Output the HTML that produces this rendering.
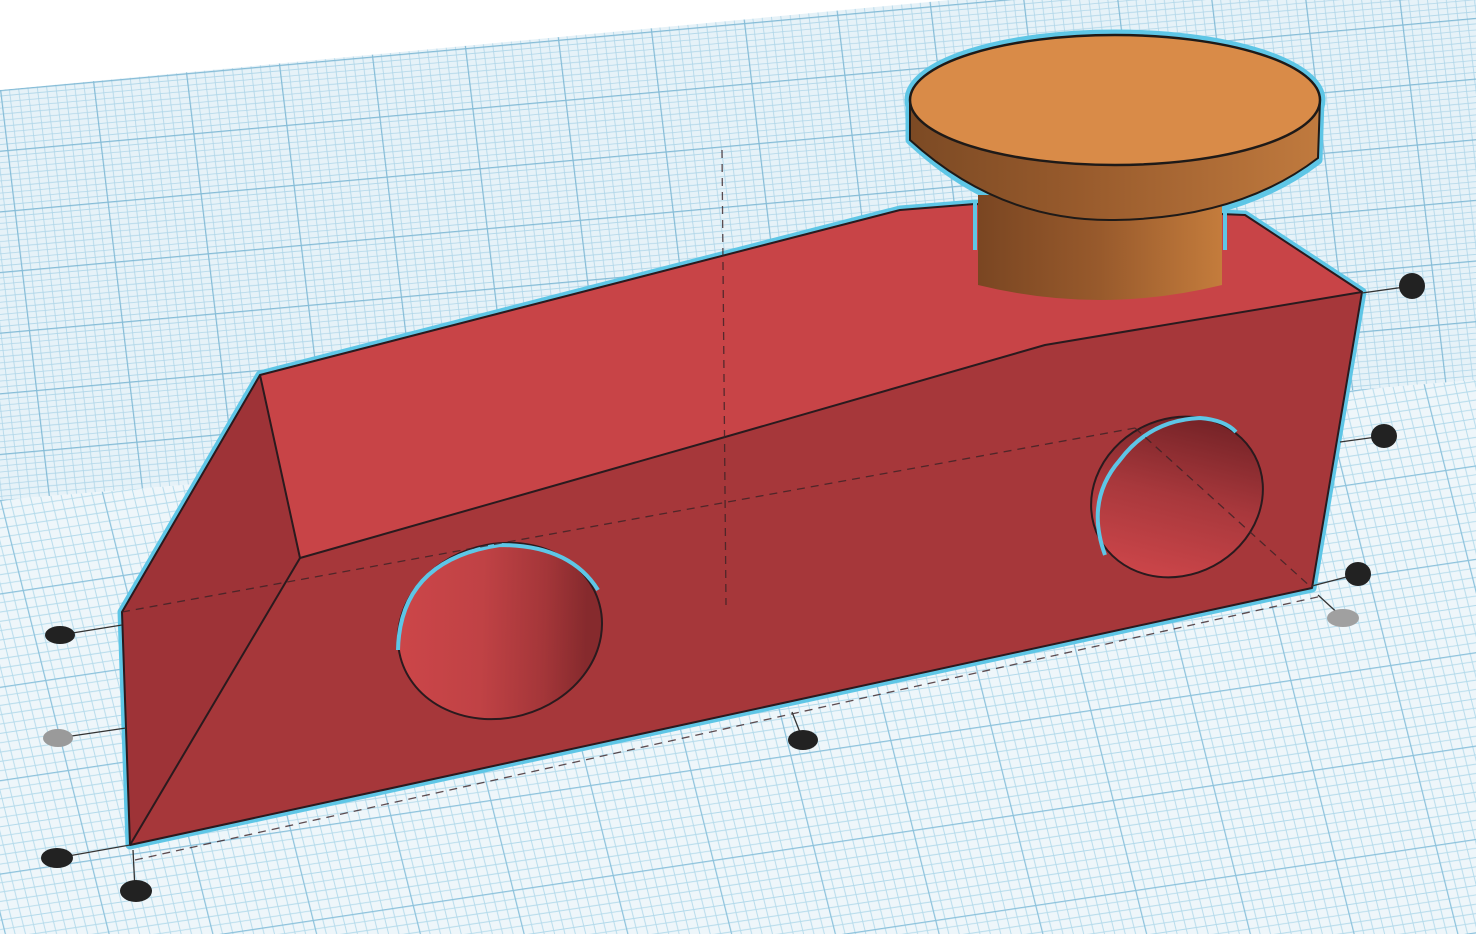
<!DOCTYPE html>
<html><head><meta charset="utf-8"><style>
html,body{margin:0;padding:0;background:#fff;width:1476px;height:934px;overflow:hidden}
svg{display:block}
</style></head><body>
<svg width="1476" height="934" viewBox="0 0 1476 934" xmlns="http://www.w3.org/2000/svg">
<defs>
<clipPath id="floorTop"><polygon points="0,90 950,0 1476,0 1476,380 0,500"/></clipPath>
<clipPath id="floorBot"><polygon points="0,500 1476,380 1476,934 0,934"/></clipPath>
<pattern id="gTop" width="93" height="60" patternUnits="userSpaceOnUse" patternTransform="matrix(1,-0.09,0.12,1,0,90)">
<rect width="93" height="60" fill="#e6f2f8"/>
<path d="M9.3,0V60M18.6,0V60M27.9,0V60M37.2,0V60M46.5,0V60M55.8,0V60M65.1,0V60M74.4,0V60M83.7,0V60M0,6H93M0,12H93M0,18H93M0,24H93M0,30H93M0,36H93M0,42H93M0,48H93M0,54H93" stroke="#afd6e9" stroke-width="0.8" fill="none"/>
<path d="M0.5,0V60M0,0.5H93" stroke="#85bcd7" stroke-width="1.4" fill="none"/>
</pattern>
<pattern id="gBot" width="100" height="90" patternUnits="userSpaceOnUse" patternTransform="matrix(1,-0.15,0.25,1,0,500)">
<rect width="100" height="90" fill="#eef6fa"/>
<path d="M10,0V90M20,0V90M30,0V90M40,0V90M50,0V90M60,0V90M70,0V90M80,0V90M90,0V90M0,9H100M0,18H100M0,27H100M0,36H100M0,45H100M0,54H100M0,63H100M0,72H100M0,81H100" stroke="#b3daeb" stroke-width="0.9" fill="none"/>
<path d="M0.5,0V90M0,0.5H100" stroke="#8cc2dc" stroke-width="1.4" fill="none"/>
</pattern>
<linearGradient id="hole" x1="0" y1="0" x2="1" y2="0.25">
<stop offset="0" stop-color="#cf474a"/><stop offset="0.5" stop-color="#c04245"/><stop offset="0.8" stop-color="#a43639"/><stop offset="1" stop-color="#862a2d"/></linearGradient>
<linearGradient id="hole2" x1="0.1" y1="0.9" x2="0.9" y2="0.1">
<stop offset="0" stop-color="#d0474b"/><stop offset="0.5" stop-color="#a8383c"/><stop offset="1" stop-color="#6e2024"/></linearGradient>
<linearGradient id="band" x1="0" y1="0" x2="1" y2="0">
<stop offset="0" stop-color="#7c4a24"/><stop offset="0.4" stop-color="#975a2c"/><stop offset="1" stop-color="#c07a3e"/></linearGradient>
<linearGradient id="stem" x1="0" y1="0" x2="1" y2="0">
<stop offset="0" stop-color="#7a4622"/><stop offset="0.5" stop-color="#985a2c"/><stop offset="1" stop-color="#c47c3c"/></linearGradient>
</defs>
<rect width="1476" height="934" fill="url(#gTop)" clip-path="url(#floorTop)"/>
<rect width="1476" height="934" fill="url(#gBot)" clip-path="url(#floorBot)"/>

<!-- outline glow -->
<g stroke="#5ec6e6" stroke-width="9" stroke-linejoin="round" fill="none">
<polygon points="122,612 260,375 900,210 975,204 1245,215 1362,292 1312,588 130,845"/>
<ellipse cx="1115" cy="100" rx="206" ry="66"/>
<path d="M910,100 L910,140 Q1000,225 1115,222 Q1240,220 1318,160 L1320,100"/>
</g>

<!-- faces -->
<polygon points="122,612 260,375 300,558 130,845" fill="#9e3337"/>
<polygon points="260,375 900,210 975,204 1245,215 1362,292 1045,345 725,437 300,558" fill="#c84447"/>
<polygon points="300,558 725,437 1045,345 1362,292 1312,588 130,845" fill="#a6373a"/>
<g stroke="#2a1a1e" stroke-width="2" fill="none" stroke-linejoin="round">
<polygon points="122,612 260,375 900,210 975,204 1245,215 1362,292 1312,588 130,845"/>
<polyline points="260,375 300,558 725,437 1045,345 1362,292"/>
<line x1="300" y1="558" x2="130" y2="845"/>
</g>

<!-- holes -->
<ellipse cx="500" cy="631" rx="103" ry="87" transform="rotate(-15 500 631)" fill="url(#hole)" stroke="#2a1a1e" stroke-width="2"/>
<path d="M398,650 Q400,560 500,545 Q570,545 598,590" fill="none" stroke="#5ec6e6" stroke-width="4"/>
<ellipse cx="1177" cy="497" rx="88" ry="78" transform="rotate(-28 1177 497)" fill="url(#hole2)" stroke="#2a1a1e" stroke-width="2"/>
<path d="M1105,555 Q1085,500 1120,460 Q1150,420 1200,418 Q1225,420 1236,432" fill="none" stroke="#5ec6e6" stroke-width="4"/>

<!-- dashed hidden edges -->
<g stroke="#3a2226" stroke-width="1.3" stroke-dasharray="8,6" fill="none" opacity="0.8">
<line x1="122" y1="612" x2="1135" y2="428"/>
<line x1="1135" y1="428" x2="1312" y2="588"/>
<line x1="722" y1="150" x2="726" y2="605"/>
<line x1="135" y1="860" x2="1322" y2="596"/>
</g>

<!-- stem -->
<path d="M978,195 L978,285 Q1100,315 1222,285 L1222,195 Z" fill="url(#stem)"/>
<g stroke="#5ec6e6" stroke-width="4"><line x1="975" y1="200" x2="975" y2="250"/><line x1="1225" y1="200" x2="1225" y2="250"/></g>
<!-- disk -->
<path d="M910,100 L910,140 Q1000,222 1115,220 Q1240,218 1318,158 L1320,100 Z" fill="url(#band)" stroke="#1e1a18" stroke-width="2"/>
<ellipse cx="1115" cy="100" rx="205" ry="65" fill="#d98b48" stroke="#1e1a18" stroke-width="2.5"/>

<!-- handles -->
<g stroke="#333" stroke-width="1.3">
<line x1="60" y1="635" x2="122" y2="625"/>
<line x1="58" y1="738" x2="126" y2="728"/>
<line x1="57" y1="858" x2="130" y2="845"/>
<line x1="135" y1="890" x2="133" y2="850"/>
<line x1="803" y1="740" x2="792" y2="712"/>
<line x1="1412" y1="286" x2="1362" y2="293"/>
<line x1="1384" y1="436" x2="1340" y2="442"/>
<line x1="1358" y1="574" x2="1312" y2="586"/>
<line x1="1343" y1="618" x2="1318" y2="595"/>
</g>
<g fill="#222">
<ellipse cx="60" cy="635" rx="15" ry="9"/>
<ellipse cx="57" cy="858" rx="16" ry="10"/>
<ellipse cx="136" cy="891" rx="16" ry="11"/>
<ellipse cx="803" cy="740" rx="15" ry="10"/>
<ellipse cx="1412" cy="286" rx="13" ry="13"/>
<ellipse cx="1384" cy="436" rx="13" ry="12"/>
<ellipse cx="1358" cy="574" rx="13" ry="12"/>
</g>
<ellipse cx="58" cy="738" rx="15" ry="9" fill="#9a9a9a"/>
<ellipse cx="1343" cy="618" rx="16" ry="9" fill="#a0a0a0"/>
</svg>
</body></html>
